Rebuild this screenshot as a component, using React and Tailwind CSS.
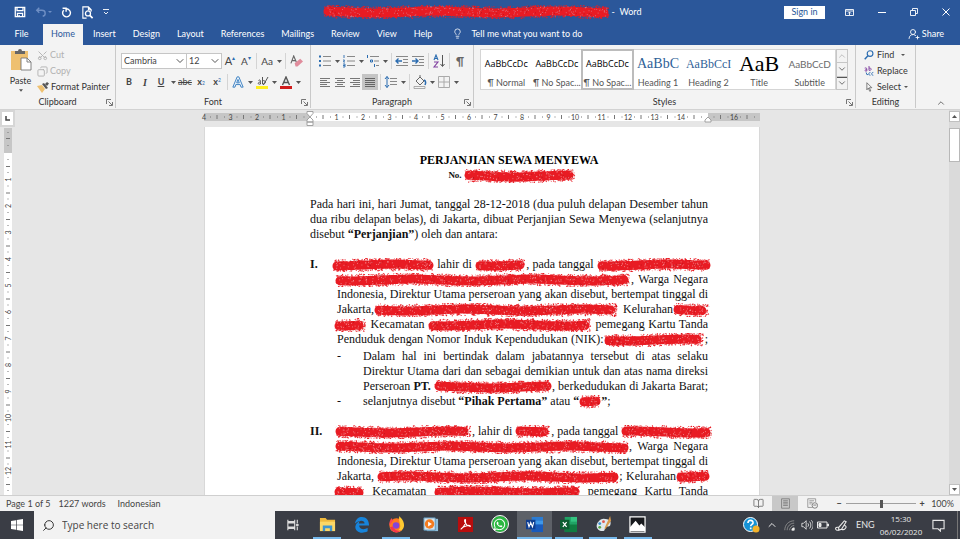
import { ChevronDown, ChevronUp, Lightbulb, Search, Scissors, Copy, UserRoundPlus, BookOpen } from 'lucide-react';
import { FaWhatsapp } from 'react-icons/fa';

const TABS = ['Insert', 'Design', 'Layout', 'References', 'Mailings', 'Review', 'View', 'Help'];

const STYLES = [
  { name: '¶ Normal', sample: 'AaBbCcDc', look: 'font-["Open_Sans",sans-serif] text-black' },
  { name: '¶ No Spac...', sample: 'AaBbCcDc', look: 'font-["Open_Sans",sans-serif] text-black' },
  { name: '¶ No Spac...', sample: 'AaBbCcDc', look: 'font-["Open_Sans",sans-serif] text-black', active: true },
  { name: 'Heading 1', sample: 'AaBbC', look: 'font-["Liberation_Serif",serif] text-[14px] text-[#2f5f97]' },
  { name: 'Heading 2', sample: 'AaBbCcI', look: 'font-["Liberation_Serif",serif] text-[12px] text-[#2f5f97]' },
  { name: 'Title', sample: 'AaB', look: 'font-["Liberation_Serif",serif] text-[22px] text-black' },
  { name: 'Subtitle', sample: 'AaBbCcD', look: 'text-[10px] text-[#6b6b6b]' },
];

// Small seeded generator so every scribble looks the same on each render
function makeRandom(seed) {
  let s = seed * 7919 + 17;
  return () => {
    s = (s * 16807) % 2147483647;
    return s / 2147483647;
  };
}

function scribblePaths(w, seed) {
  const rnd = makeRandom(seed);
  const mid = x => 7 + Math.sin(x / 19 + seed) * 0.9;
  let core = '';
  let edge = '';
  let light = '';
  let dark = '';
  for (let x = 5; x <= w - 5; x += 4) {
    core += `${core ? 'L' : 'M'}${x} ${mid(x).toFixed(1)}`;
  }
  for (let i = 0; i < w * 6; i++) {
    const x = 1 + rnd() * (w - 3);
    const end = Math.min(1, (Math.min(x, w - x) + 3) / 6);
    const y = mid(x) + (rnd() - 0.5) * 12.5 * end;
    edge += `M${x.toFixed(1)} ${y.toFixed(1)}l${(rnd() * 2 - 0.5).toFixed(1)} ${(rnd() * 2 - 1).toFixed(1)}`;
  }
  for (let i = 0; i < w * 0.9; i++) {
    const x = 3 + rnd() * (w - 6);
    const y = mid(x) + (rnd() - 0.5) * 10;
    light += `M${x.toFixed(1)} ${y.toFixed(1)}h.8`;
    if (i % 4 === 0) dark += `M${(x + 2).toFixed(1)} ${(y - 1).toFixed(1)}h.8`;
  }
  return { core, edge, light, dark };
}

function Scribble({ w, seed = w, className = '', tone = '#fff' }) {
  const p = scribblePaths(w, seed);
  return (
    <svg width={w} height="14" viewBox={`0 0 ${w} 14`} fill="none" aria-hidden="true" className={`inline-block align-middle shrink-0 ${className}`}>
      <path d={p.core} stroke="#e81c24" strokeWidth="9" strokeLinecap="round" />
      <path d={p.edge} stroke="#e81c24" strokeWidth="1.100" />
      <path d={p.light} stroke={tone} strokeOpacity=".6" strokeWidth=".8" />
      <path d={p.dark} stroke="#6d1014" strokeOpacity=".5" strokeWidth=".8" />
    </svg>
  );
}

function Icon({ size = 14, children, className = '' }) {
  return (
    <svg width={size} height={size} viewBox="0 0 14 14" fill="none" stroke="currentColor" strokeWidth="1" aria-hidden="true" className={`shrink-0 ${className}`}>
      {children}
    </svg>
  );
}

function Tool({ label, className = 'w-4', children }) {
  return (
    <button type="button" aria-label={label} className={`h-4 shrink-0 flex items-center justify-center text-[#444] ${className}`}>
      {children}
    </button>
  );
}

function Caret({ label = 'More', className = 'w-2' }) {
  return (
    <button type="button" aria-label={label} className={`h-4 shrink-0 flex items-center justify-center text-[#555] ${className}`}>
      <svg width="5" height="3" viewBox="0 0 5 3" fill="currentColor" aria-hidden="true"><path d="M0 0h5L2.500 3z" /></svg>
    </button>
  );
}

function Sep() {
  return <span className="w-px h-4 mx-0.5 shrink-0 bg-[#d4d4d4]" />;
}

function Group({ title, launcher = true, className, children }) {
  return (
    <section aria-label={title} className={`relative shrink-0 border-r border-[#c9c9c9] flex flex-col ${className}`}>
      <div className="flex-1">{children}</div>
      <div className="h-3 flex items-center justify-center leading-3 text-[#333]">{title}</div>
      {launcher && (
        <button type="button" aria-label={`${title} settings`} className="absolute right-0.5 bottom-0.5 text-[#666]">
          <svg width="7" height="7" viewBox="0 0 7 7" fill="none" stroke="currentColor" aria-hidden="true"><path d="M.5 5V.5H5M2.500 2.500l3.500 3.500M6.500 3v3.500H3" strokeWidth=".9" /></svg>
        </button>
      )}
    </section>
  );
}

function TitleBar() {
  return (
    <header className="h-6 flex items-center text-white">
      <div className="flex-1 flex items-center gap-[9px] pl-3.5">
        <button type="button" aria-label="Save">
          <Icon size={12}><path d="M1.500 1.500h11v11h-11zM3.500 1.500v4h7v-4M4 12.500V8.500h6v4M6 10.500v2" strokeWidth="1.500" /></Icon>
        </button>
        <button type="button" aria-label="Undo" className="flex items-center gap-px text-[#6f8fc4]">
          <Icon size={12}><path d="M5 2L2 5l3 3M2 5h6c5 0 5 6 1 7" strokeWidth="1.600" /></Icon>
          <svg width="4" height="2" viewBox="0 0 4 2" fill="currentColor"><path d="M0 0h4L2 2z" /></svg>
        </button>
        <button type="button" aria-label="Repeat">
          <Icon size={11}><path d="M3.500 4a5 5 0 1 0 6.500-.500M2 1.500h4.500V6M10 3.500c-1-.8-2-1.200-3-1.200" strokeWidth="1.800" /></Icon>
        </button>
        <button type="button" aria-label="Print preview">
          <Icon size={13}><path d="M6 13H2V1h6l3 3v2M8 1v3h3" strokeWidth="1.200" /><circle cx="7.500" cy="8" r="2.700" strokeWidth="1.400" /><path d="M9.500 10l3 3" strokeWidth="1.800" /></Icon>
        </button>
        <button type="button" aria-label="Customize toolbar">
          <svg width="6" height="6" viewBox="0 0 6 6" fill="none" stroke="currentColor"><path d="M0 .5h6M1 3l2 2 2-2" strokeWidth=".9" /></svg>
        </button>
      </div>
      <h1 className="flex items-center whitespace-nowrap">
        <Scribble w={287} seed={5} tone="#c9d3ea" />
        <span className="pl-0.5">- &nbsp;Word</span>
      </h1>
      <div className="flex-1 flex items-center justify-end gap-6 pr-2.5">
        <button type="button" className="h-[13px] w-[41px] mr-[-4px] bg-white text-[#2b579a] leading-3">Sign in</button>
        <button type="button" aria-label="Ribbon display options">
          <svg width="9" height="7" viewBox="0 0 9 7" fill="none" stroke="currentColor"><path d="M.5 .5h8v6h-8zM.5 2h8M4.500 6V3M3 4.500L4.500 3 6 4.500" strokeWidth=".9" /></svg>
        </button>
        <button type="button" aria-label="Minimize"><svg width="8" height="8" viewBox="0 0 8 8" stroke="currentColor"><path d="M0 4.500h8" /></svg></button>
        <button type="button" aria-label="Restore"><svg width="8" height="8" viewBox="0 0 8 8" fill="none" stroke="currentColor"><path d="M.5 2.500h5v5h-5zM2.500 2.500v-2h5v5h-2" strokeWidth=".9" /></svg></button>
        <button type="button" aria-label="Close"><svg width="8" height="8" viewBox="0 0 8 8" stroke="currentColor"><path d="M.5 .5l7 7M7.500 .5l-7 7" /></svg></button>
      </div>
    </header>
  );
}

function TabBar() {
  return (
    <nav className="h-[21px] flex items-stretch text-white">
      <button type="button" className="w-[43px] pb-0.5">File</button>
      <button type="button" aria-current="page" className="w-10 bg-[#f3f3f3] text-[#2b579a] pb-0.5">Home</button>
      <div className="flex gap-[17px] pl-2.5 pb-0.5">
        {TABS.map(t => <button key={t} type="button">{t}</button>)}
      </div>
      <button type="button" className="flex items-center gap-2 pl-5 pb-0.5">
        <Lightbulb size={11} strokeWidth={1.700} />
        Tell me what you want to do
      </button>
      <button type="button" className="ml-auto pr-4 pb-0.5 flex items-center gap-0.5">
        <UserRoundPlus size={12} strokeWidth={1.700} />
        Share
      </button>
    </nav>
  );
}

function Clipboard() {
  return (
    <Group title="Clipboard" className="w-[116px]">
      <div className="flex pt-1">
        <button type="button" className="w-[37px] pl-1 flex flex-col items-center leading-3">
          <svg width="22" height="22" viewBox="0 0 22 22" aria-hidden="true" className="mb-1">
            <rect x="1" y="2" width="17" height="19" fill="#eec070" />
            <path d="M5 2h3a2 2 0 0 1 4 0h3v3H5z" fill="#666" />
            <path d="M11 9h6l4 4v8H11z" fill="#fff" stroke="#777" strokeWidth=".9" />
            <path d="M17 9v4h4" fill="none" stroke="#777" strokeWidth=".9" />
          </svg>
          Paste
          <svg width="4" height="3" viewBox="0 0 5 3" fill="#555" className="mt-0.5"><path d="M0 0h5L2.500 3z" /></svg>
        </button>
        <div className="flex flex-col items-start gap-1">
          <button type="button" disabled className="h-3 flex items-center gap-0.5 text-[#b1b1b1]"><Scissors size={11} className="-rotate-90" />Cut</button>
          <button type="button" disabled className="h-3 flex items-center gap-0.5 text-[#b1b1b1]"><Copy size={11} className="-scale-x-100" />Copy</button>
          <button type="button" className="h-3 flex items-center gap-0.5">
            <svg width="12" height="11" viewBox="0 0 12 11" aria-hidden="true"><path d="M0 4l5-1 3 4-3 4z" fill="#eec070" /><path d="M5 2l2-1 4 5-2 1zM8 2l2-2 2 1.500L10 4z" fill="#555" /></svg>
            Format Painter
          </button>
        </div>
      </div>
    </Group>
  );
}

function Combo({ label, value, className }) {
  return (
    <label className={`relative h-4 block border border-[#c6c6c6] bg-white ${className}`}>
      <select aria-label={label} defaultValue={value} className="w-full h-full appearance-none pl-0.5 leading-3 outline-none text-[#444] block">
        <option>{value}</option>
      </select>
      <ChevronDown size={12} strokeWidth={2} className="absolute right-0 top-px pointer-events-none text-[#555]" />
    </label>
  );
}

function FontGroup() {
  return (
    <Group title="Font" className="w-[195px]">
      <div className="flex items-center h-4 mt-2 pl-[5px]">
        <Combo label="Font" value="Cambria" className="w-[66px]" />
        <Combo label="Font size" value="12" className="w-9 -ml-px" />
        <Tool label="Grow font"><span className="text-[11px]">A</span><span className="text-[#2b6cb0] text-[6px] self-start">▴</span></Tool>
        <Tool label="Shrink font"><span className="text-[10px]">A</span><span className="text-[#2b6cb0] text-[6px] self-start">▾</span></Tool>
        <Sep />
        <Tool label="Change case"><span className="text-[10px]">Aa</span></Tool>
        <Caret />
        <Sep />
        <Tool label="Clear formatting">
          <Icon size={13}><path d="M1 9L4 1l3 7M2 6h4" stroke="#666" strokeWidth="1.200" /><path d="M5 9l6-5 3 3-6 5.500H6z" fill="#e08c9c" stroke="none" /></Icon>
        </Tool>
      </div>
      <div className="flex items-center h-4 mt-[5px] pl-[5px]">
        <Tool label="Bold"><b>B</b></Tool>
        <Tool label="Italic"><i className="font-['Liberation_Serif',serif] text-[10px] font-bold">I</i></Tool>
        <Tool label="Underline"><u className="font-bold">U</u></Tool>
        <Caret />
        <Tool label="Strikethrough"><s>abc</s></Tool>
        <Tool label="Subscript"><b>x</b><sub className="text-[5px] text-[#2b6cb0]">2</sub></Tool>
        <Tool label="Superscript"><b>x</b><sup className="text-[5px] text-[#2b6cb0]">2</sup></Tool>
        <Sep />
        <Tool label="Text effects">
          <Icon size={12}><path d="M1 13L6 1h2l5 12h-2.500L9.500 10h-5l-1 3zM5.500 8L7 4l1.500 4z" stroke="#3c7fc0" fill="#e8f2fb" strokeWidth="1.100" /></Icon>
        </Tool>
        <Caret />
        <Tool label="Highlight">
          <svg width="13" height="13" viewBox="0 0 13 13"><path d="M0 10h12v3H0z" fill="#ffef1f" /><path d="M2.500 4.500c2-1.500 2 0 2 3.500-3 1-3-2 0-2M6.500 1v7c4 1 3.500-5 0-3M12 1L8 8l-1 1" fill="none" stroke="#555" strokeWidth="1" /></svg>
        </Tool>
        <Caret />
        <Tool label="Font color">
          <svg width="12" height="13" viewBox="0 0 12 13"><path d="M0 10h12v3H0z" fill="#d01c1c" /><path d="M2.500 9L6 1l3.500 8M4 6.500h4" fill="none" stroke="#555" strokeWidth="1.400" /></svg>
        </Tool>
        <Caret />
      </div>
    </Group>
  );
}

const ALIGN = {
  'Align left': 'M2 3.500h10M2 5.500h7M2 7.500h10M2 9.500h7M2 11.500h10',
  Center: 'M2 3.500h10M4 5.500h6M2 7.500h10M4 9.500h6M2 11.500h10',
  'Align right': 'M2 3.500h10M5 5.500h7M2 7.500h10M5 9.500h7M2 11.500h10',
};

function ParagraphGroup() {
  return (
    <Group title="Paragraph" className="w-[163px]">
      <div className="flex items-center h-4 mt-2 pl-1.5">
        <Tool label="Bullets"><Icon><path d="M5 2.500h8M5 7h8M5 11.500h8" stroke="#888" /><path d="M1 2.500h2M1 7h2M1 11.500h2" stroke="#2b6cb0" strokeWidth="2" /></Icon></Tool>
        <Caret />
        <Tool label="Numbering"><Icon><path d="M5 2.500h8M5 7h8M5 11.500h8" stroke="#888" /><path d="M2 1v3M1 6h1.500l-1 2H3M1 10h2v3H1M1 11.500h2" stroke="#2b6cb0" strokeWidth=".9" /></Icon></Tool>
        <Caret />
        <Tool label="Multilevel list"><Icon><path d="M4 2.500h9M8 7h5M10 11.500h3" stroke="#888" /><path d="M1.500 1v3M4.500 6h2v2h-2zM8.500 10v3" stroke="#2b6cb0" /></Icon></Tool>
        <Caret />
        <Sep />
        <Tool label="Decrease indent"><Icon><path d="M1 2.500h12M8 5.500h5M8 8.500h5M1 11.500h12" stroke="#888" /><path d="M7 7H1M3.500 4.500L1 7l2.500 2.500" stroke="#2b6cb0" strokeWidth="1.400" /></Icon></Tool>
        <Tool label="Increase indent"><Icon><path d="M1 2.500h12M8 5.500h5M8 8.500h5M1 11.500h12" stroke="#888" /><path d="M1 7h6M4.500 4.500L7 7 4.500 9.500" stroke="#2b6cb0" strokeWidth="1.400" /></Icon></Tool>
        <Sep />
        <Tool label="Sort"><Icon><path d="M2 6l2-5 2 5M2.500 4.500h3" stroke="#2b6cb0" strokeWidth="1.100" /><path d="M2 8h4l-4 5h4" stroke="#8040a0" strokeWidth="1.100" /><path d="M10.500 1v11M8.500 10l2 2.500 2-2.500" stroke="#555" /></Icon></Tool>
        <Sep />
        <Tool label="Show marks"><b className="text-[11px] text-[#666]">¶</b></Tool>
      </div>
      <div className="flex items-center h-4 mt-[5px] pl-1.5">
        {Object.entries(ALIGN).map(([label, d]) => (
          <Tool key={label} label={label} className="w-[15px]"><Icon><path d={d} stroke="#777" /></Icon></Tool>
        ))}
        <Tool label="Justify" className="w-4 bg-[#c5c5c5]"><Icon><path d="M2 3.500h10M2 5.500h10M2 7.500h10M2 9.500h10M2 11.500h10" stroke="#666" /></Icon></Tool>
        <Sep />
        <Tool label="Line spacing"><Icon><path d="M6 3.500h7M6 6.500h7M6 9.500h7" stroke="#888" /><path d="M3 1.500v11M1 4l2-2.500L5 4M1 10l2 2.500L5 10" stroke="#2b6cb0" /></Icon></Tool>
        <Caret />
        <Sep />
        <Tool label="Shading"><Icon><path d="M3 6l4-4 4 4-4 4zM7 2V0" stroke="#666" /><path d="M11 5c2 1 2 3 1 5" stroke="#2b6cb0" strokeWidth="1.500" /><path d="M1 11.500h11v2H1z" stroke="#999" strokeWidth=".8" /></Icon></Tool>
        <Caret />
        <Tool label="Borders"><Icon><path d="M1.500 1.500h11v11h-11zM7 1.500v11M1.500 7h11" stroke="#aaa" /></Icon></Tool>
        <Caret />
      </div>
    </Group>
  );
}

function StylesGroup() {
  return (
    <Group title="Styles" className="w-[382px]">
      <div className="flex mt-1 ml-1.5 mr-[7px] h-[41px]">
        <div className="flex-1 grid grid-cols-7 bg-white border border-[#d5d5d5]">
          {STYLES.map((s, i) => (
            <button
              key={i}
              type="button"
              className={`min-w-0 flex flex-col items-center ${s.active ? 'outline-2 -outline-offset-1 outline-[#bcbcbc]' : ''}`}
            >
              <span className={`h-[27px] whitespace-nowrap leading-[28px] ${s.look}`}>{s.sample}</span>
              <span className="leading-3 text-[#555] whitespace-nowrap">{s.name}</span>
            </button>
          ))}
        </div>
        <div className="w-3 flex flex-col divide-y divide-[#c6c6c6] border border-[#c6c6c6] text-[#555]">
          <button type="button" aria-label="Previous styles" className="flex-1 flex items-center justify-center text-[#b5b5b5]"><ChevronUp size={10} /></button>
          <button type="button" aria-label="Next styles" className="flex-1 flex items-center justify-center"><ChevronDown size={10} /></button>
          <button type="button" aria-label="All styles" className="flex-1 flex flex-col items-center justify-center"><span className="w-2.5 h-px bg-[#555]" /><ChevronDown size={10} /></button>
        </div>
      </div>
    </Group>
  );
}

function EditingGroup() {
  return (
    <Group title="Editing" launcher={false} className="w-[60px]">
      <div className="flex flex-col items-start gap-1 pt-1 pl-2">
        <button type="button" className="h-3 flex items-center gap-[3px]">
          <Icon size={10}><circle cx="8.500" cy="5" r="4" stroke="#2b6cb0" strokeWidth="1.600" /><path d="M5.500 8L1 13" stroke="#2b6cb0" strokeWidth="2" /></Icon>
          Find
          <svg width="4" height="2" viewBox="0 0 4 2" fill="#555" className="ml-1"><path d="M0 0h4L2 2z" /></svg>
        </button>
        <button type="button" className="h-3 flex items-center gap-[3px]">
          <Icon size={10}><path d="M1 3c3-1 3 0 3 4-3 1-4-2 0-2M7 0v6c4 1 4-4 0-3" stroke="#8040a0" strokeWidth="1.300" /><path d="M3 9l1 3h2M9 9c-3 0-3 4 0 4M13 9c-3 0-3 4 0 4" stroke="#2b6cb0" strokeWidth="1.300" /></Icon>
          Replace
        </button>
        <button type="button" className="h-3 flex items-center gap-[3px]">
          <Icon size={10}><path d="M4 1l7 7H7.500l2 4.500-1.500.5-2-4.500L4 11z" stroke="#555" /></Icon>
          Select
          <svg width="4" height="2" viewBox="0 0 4 2" fill="#555"><path d="M0 0h4L2 2z" /></svg>
        </button>
      </div>
    </Group>
  );
}

const UNIT = 26.5;

function HorizontalRuler() {
  const left = [4, 3, 2, 1];
  const right = Array.from({ length: 16 }, (_, i) => i + 1).filter(n => n !== 15);
  const cells = Array.from({ length: 21 }, (_, i) => i - 4);
  return (
    <svg width="556" height="15" viewBox="0 0 556 15" aria-label="Ruler" className="overflow-visible block">
      <path d="M0 3h556v8H0z" fill="#c6c6c6" />
      <path d="M106 3h398v8H106z" fill="#fff" />
      <g stroke="#777" strokeWidth="1">
        {cells.filter(c => 106 + c * UNIT + 20 < 556).map(c => (
          <path key={c} d={`M${106 + c * UNIT + 6} 7h1M${106 + c * UNIT + 13} 5v4M${106 + c * UNIT + 20} 7h1`} />
        ))}
      </g>
      <g fontSize="7" fill="#444" textAnchor="middle">
        {left.map(n => <text key={`l${n}`} x={106 - n * UNIT} y="10">{n}</text>)}
        {right.map(n => <text key={n} x={106 + n * UNIT} y="10">{n}</text>)}
      </g>
      <path d="M103 1.500h6v2l-3 3.500-3-3.500zM103 12v-2l3-3 3 3v2zM103 12h6v3.500h-6zM501 12v-2l3-3 3 3v2z" fill="#fff" stroke="#999" strokeWidth=".9" />
    </svg>
  );
}

function VerticalRuler() {
  return (
    <svg width="8" height="400" viewBox="0 0 8 400" aria-label="Vertical ruler" className="block">
      <path d="M0 0h8v25H0z" fill="#c6c6c6" />
      <path d="M0 25h8v375H0z" fill="#fff" />
      <path d="M2 10.500h4M4 4v1M4 17v1" stroke="#777" />
      {Array.from({ length: 14 }, (_, i) => (
        <path key={i} d={`M4 ${31 + i * UNIT}v1M2 ${38.5 + i * UNIT}h4M4 ${44 + i * UNIT}v1`} stroke="#777" />
      ))}
      <g fontSize="7" fill="#444" textAnchor="middle">
        {Array.from({ length: 12 }, (_, i) => (
          <text key={i} transform={`translate(6.500 ${51.5 + i * UNIT}) rotate(-90)`}>{i + 1}</text>
        ))}
      </g>
    </svg>
  );
}

// One typeset line, spread to both margins unless it is the last of its paragraph
function Line({ last, children }) {
  return (
    <span className={`block whitespace-nowrap ${last ? '' : 'text-justify [text-align-last:justify]'}`}>{children}</span>
  );
}

function Party({ num, children }) {
  return (
    <li className="flex mt-[15px]">
      <b className="w-[27px] shrink-0">{num}</b>
      <div className="flex-1 min-w-0">{children}</div>
    </li>
  );
}

function Document() {
  return (
    <article className="w-[556px] shrink-0 bg-white border-x border-[#d8d8d8] pl-[105px] pr-[51px] pt-[25px] font-['Liberation_Serif',serif] text-[12px] leading-[15px] text-[#111]">
      <h2 className="text-center font-bold leading-4 text-black">PERJANJIAN SEWA MENYEWA</h2>
      <p className="text-center font-bold text-[9px] h-[15px] flex justify-center items-center gap-0.5 pl-1.5">No. <Scribble w={112} /></p>
      <p className="mt-3.5">
        <Line>Pada hari ini, hari Jumat, tanggal 28-12-2018 (dua puluh delapan Desember tahun</Line>
        <Line>dua ribu delapan belas), di Jakarta, dibuat Perjanjian Sewa Menyewa (selanjutnya</Line>
        <Line last>disebut <b>“Perjanjian”</b>) oleh dan antara:</Line>
      </p>
      <ol>
        <Party num="I.">
          <Line><Scribble w={102} className="-ml-[5px] -my-1" /> lahir di <Scribble w={51} className="-my-1" />, pada tanggal <Scribble w={114} className="-mr-[3px] -my-1" /></Line>
          <Line><Scribble w={296} className="-ml-0.5 -my-1" />, Warga Negara</Line>
          <Line>Indonesia, Direktur Utama perseroan yang akan disebut, bertempat tinggal di</Line>
          <Line>Jakarta,<Scribble w={245} className="-my-1" /> Kelurahan<Scribble w={37} className="-mr-0.5 -my-1" /></Line>
          <Line><Scribble w={33} className="-ml-[3px] -my-1" /> Kecamatan <Scribble w={164} className="-my-1" /> pemegang Kartu Tanda</Line>
          <Line>Penduduk dengan Nomor Induk Kependudukan (NIK):<Scribble w={101} className="-my-1" />;</Line>
          <ul className="mt-0.5">
            <li className="flex">
              <span className="w-[26px] shrink-0">-</span>
              <div className="flex-1 min-w-0">
                <Line>Dalam hal ini bertindak dalam jabatannya tersebut di atas selaku</Line>
                <Line>Direktur Utama dari dan sebagai demikian untuk dan atas nama direksi</Line>
                <Line>Perseroan <b>PT.</b> <Scribble w={118} className="-my-1" />, berkedudukan di Jakarta Barat;</Line>
              </div>
            </li>
            <li className="flex">
              <span className="w-[26px] shrink-0">-</span>
              <Line last>selanjutnya disebut <b>“Pihak Pertama”</b> atau <b>“</b><Scribble w={22} className="-my-1" /><b>”</b>;</Line>
            </li>
          </ul>
        </Party>
        <Party num="II.">
          <Line><Scribble w={137} className="-ml-0.5 -my-1" />, lahir di <Scribble w={36} className="-my-1" />, pada tanggal <Scribble w={92} className="-mr-[3px] -my-1" /></Line>
          <Line><Scribble w={294} className="-ml-0.5 -my-1" />, Warga Negara</Line>
          <Line>Indonesia, Direktur Utama perseroan yang akan disebut, bertempat tinggal di</Line>
          <Line>Jakarta, <Scribble w={242} className="-my-1" />; Kelurahan<Scribble w={34} className="-mr-0.5 -my-1" /></Line>
          <Line><Scribble w={31} className="-ml-[3px] -my-1" /> Kecamatan <Scribble w={147} className="-my-1" /> pemegang Kartu Tanda</Line>
        </Party>
      </ol>
    </article>
  );
}

function Workspace() {
  return (
    <main className="flex-1 min-h-0 flex bg-[#e6e6e6]">
      <div className="w-[15px] shrink-0 flex flex-col overflow-hidden">
        <div className="h-[17px] shrink-0 border-2 border-[#d6d6d6] bg-white flex items-center justify-center mb-px">
          <svg width="5" height="5" viewBox="0 0 5 5" stroke="#444" fill="none"><path d="M1 0v4h4" strokeWidth="1.500" /></svg>
        </div>
        <div className="pl-1"><VerticalRuler /></div>
      </div>
      <div className="flex-1 min-w-0 flex flex-col items-center overflow-hidden">
        <div className="h-[17px] shrink-0"><HorizontalRuler /></div>
        <div className="flex-1 min-h-0 overflow-hidden flex"><Document /></div>
      </div>
      <div className="w-[11px] shrink-0 pt-px flex flex-col bg-[#dadada]">
        <button type="button" aria-label="Scroll up" className="h-[11px] border border-[#c0c0c0] bg-white flex items-center justify-center"><svg width="5" height="3" viewBox="0 0 5 3" fill="#555"><path d="M0 3h5L2.500 0z" /></svg></button>
        <div className="h-[34px] mt-1.5 border border-[#b8b8b8] bg-white" />
        <button type="button" aria-label="Scroll down" className="mt-auto h-[11px] border border-[#c0c0c0] bg-white flex items-center justify-center"><svg width="5" height="3" viewBox="0 0 5 3" fill="#555"><path d="M0 0h5L2.500 3z" /></svg></button>
      </div>
    </main>
  );
}

function StatusBar() {
  return (
    <footer className="h-4 shrink-0 border-t border-[#cfcfcf] bg-[#f2f2f2] flex items-center pl-1.5 pr-1.5 text-[#444]">
      <span>Page 1 of 5</span>
      <span className="pl-2">1227 words</span>
      <span className="pl-3">Indonesian</span>
      <div className="ml-auto flex items-center">
        <button type="button" aria-label="Read mode" className="w-7 flex justify-center text-[#777]"><BookOpen size={11} /></button>
        <button type="button" aria-label="Print layout" className="w-[26px] h-[15px] bg-[#c8c8c8] flex items-center justify-center">
          <Icon size={11}><path d="M2 1h10v12H2zM4 3.500h6M4 5.500h6M4 7.500h6M4 9.500h6" stroke="#777" /></Icon>
        </button>
        <button type="button" aria-label="Web layout" className="w-7 flex justify-center">
          <Icon size={11}><path d="M7 12H1V1h10v4M3 3.500h6M3 5.500h4M3 7.500h3" stroke="#888" /><circle cx="10" cy="9.500" r="3.500" stroke="#666" /><path d="M8 9h4" stroke="#666" /></Icon>
        </button>
        <button type="button" aria-label="Zoom out" className="ml-2 w-2.5 font-bold">−</button>
        <input
          type="range"
          aria-label="Zoom"
          defaultValue="50"
          className="w-[70px] h-2 mx-0.5 appearance-none bg-[linear-gradient(#a0a0a0,#a0a0a0)] bg-no-repeat bg-center bg-[length:100%_1px] [&::-webkit-slider-thumb]:appearance-none [&::-webkit-slider-thumb]:w-[3px] [&::-webkit-slider-thumb]:h-2 [&::-webkit-slider-thumb]:bg-[#555]"
        />
        <button type="button" aria-label="Zoom in" className="w-2 font-bold">+</button>
        <span className="w-7 text-right">100%</span>
      </div>
    </footer>
  );
}

const APPS = [
  {
    name: 'File Explorer', open: true,
    icon: <><path d="M1 2h6l1.500 2H17v12H1z" fill="#f0b93c" /><path d="M1 6h16v10H1z" fill="#fcd766" /><path d="M4 16v-6h10v6h-2.500v-3h-5v3z" fill="#3f95d0" /></>,
  },
  {
    name: 'Edge',
    icon: <path d="M2 8C3 3 6 1 9.500 1 14 1 17 4.500 17 10H6.500c0 4 5 5 9 2.800v3.400C8 20 2 16 2.500 11 3 8 5 6 7.500 5.500 6.500 6 6.200 7 6.200 8h6C12.200 5 8 3.500 2 8z" fill="#1784db" />,
  },
  {
    name: 'Firefox', open: true,
    icon: <><circle cx="9" cy="10" r="7.500" fill="#ff7a1f" /><path d="M12 0c1 2 5 4 5 10-1 9-13 9-15.500 2C4 17 12 18 13 11c0-4-2-5-1-11z" fill="#ffcb32" /><path d="M1.500 10C1 6 3 3 4 2c0 2 1 2 2 2z" fill="#ff4a4f" /><circle cx="8.500" cy="10" r="3.500" fill="#8445d8" /><path d="M2 12c2 6 8 7 12 3-4 1-7 0-9-4z" fill="#f4364c" /></>,
  },
  {
    name: 'Media Player',
    icon: <><path d="M5 3h12v13H5z" fill="#8fc0dd" /><path d="M2 2h12v13H2z" fill="#d4e5f0" stroke="#5b8fb2" /><circle cx="8" cy="8.500" r="5" fill="#f47c20" /><path d="M6.500 6l4 2.500-4 2.500z" fill="#fff" /></>,
  },
  {
    name: 'Acrobat Reader',
    icon: <><path d="M1 1h16v16H1z" fill="#b90d0d" /><path d="M4 14c2-1 6-6 5-10-2-1-1 6 5 7 1-2-7-1-10 3z" fill="none" stroke="#fff" strokeWidth="1.200" /></>,
  },
  { name: 'WhatsApp', whatsapp: true },
  {
    name: 'Word', open: true, active: true,
    icon: <><path d="M6 1h12v16H6z" fill="#2b7cd3" /><path d="M6 5h12v4H6z" fill="#3f97e8" /><path d="M6 9h12v8H6z" fill="#185abd" /><path d="M0 4h10v10H0z" fill="#103f91" /><path d="M1.800 6.500l1.400 5L5 7l1.800 4.500 1.400-5" fill="none" stroke="#fff" strokeWidth="1.200" /></>,
  },
  {
    name: 'Excel', open: true,
    icon: <><path d="M5 1h13v16H5z" fill="#21a366" /><path d="M11.500 1H18v5h-6.500z" fill="#33c481" /><path d="M5 9h13v8H5z" fill="#107c41" /><path d="M0 4h10v10H0z" fill="#0c5c30" /><path d="M3 6.500l4 5M7 6.500l-4 5" stroke="#fff" strokeWidth="1.300" /></>,
  },
  {
    name: 'Paint', open: true,
    icon: <><path d="M9 3c6 0 9 3 7 7-1 2-4 0-5 2s0 4-3 4c-5 0-7-4-6-7s4-6 7-6z" fill="#dfe7ec" /><circle cx="5" cy="8" r="1.500" fill="#3b8ed0" /><circle cx="9" cy="6" r="1.500" fill="#e0574c" /><circle cx="5" cy="12" r="1.500" fill="#58a845" /><path d="M16 0l1 5-6 9-1-1z" fill="#d89a4c" /></>,
  },
  {
    name: 'Photos', open: true,
    icon: <><path d="M1 1h16v16H1z" fill="#17191d" stroke="#fff" strokeWidth="1.300" /><path d="M1 16v-4l6-7 4 5 2-2 4 4v4z" fill="#fff" /></>,
  },
];

function Taskbar() {
  return (
    <div className="h-7 shrink-0 bg-[#3a3d45] flex items-stretch text-white">
      <button type="button" aria-label="Start" className="w-[34px] flex items-center justify-center">
        <svg width="12" height="12" viewBox="0 0 12 12" fill="#fff"><path d="M0 2l5-.8v4.500H0zM5.700 1L12 0v5.700H5.700zM0 6.300h5v4.500L0 10zM5.700 6.300H12V12l-6.300-1z" /></svg>
      </button>
      <label className="w-[241px] bg-[#f2f2f2] flex items-center pl-2 gap-[7px] text-[#333]">
        <Search size={13} strokeWidth={1.800} className="-scale-x-100" />
        <input type="text" aria-label="Search" placeholder="Type here to search" className="flex-1 min-w-0 font-['Open_Sans',sans-serif] text-[10px] outline-none placeholder:text-[#444]" />
      </label>
      <button type="button" aria-label="Task view" className="w-[35px] flex items-center justify-center text-[#ddd]">
        <Icon size={12}><path d="M1 1v2h8V1M1 13v-2h8v2M1 4.500h8v5H1zM12 1v4M12 9v4" strokeWidth="1.300" /><path d="M11 6h2v2h-2z" fill="currentColor" /></Icon>
      </button>
      <div className="w-[345px] grid grid-cols-10">
        {APPS.map(a => (
          <button
            key={a.name}
            type="button"
            aria-label={a.name}
            className={`flex flex-col items-center ${a.active ? 'bg-[#5d6168]' : ''}`}
          >
            <span className="flex-1 flex items-center">
              {a.whatsapp
                ? <span className="w-4 h-4 rounded-full bg-[#2cb742] flex items-center justify-center outline outline-white"><FaWhatsapp size={13} /></span>
                : <svg width="17" height="17" viewBox="0 0 18 18" aria-hidden="true">{a.icon}</svg>}
            </span>
            <span className={`h-0.5 ${a.active ? 'w-full' : 'w-7'} ${a.open ? 'bg-[#76b9ed]' : ''}`} />
          </button>
        ))}
      </div>
      <div className="ml-auto flex items-center text-[#e8e8e8]">
        <button type="button" aria-label="Help" className="mr-1.5">
          <svg width="17" height="16" viewBox="0 0 17 16"><circle cx="7.500" cy="7.500" r="7" fill="#1592d4" stroke="#fff" /><path d="M5 6c0-4 5.500-3 5 0-.3 1.500-2.300 1.500-2.300 3.300M7.700 10.500v1.700" stroke="#fff" strokeWidth="1.700" fill="none" /><circle cx="13" cy="12" r="3.500" fill="#f3b32b" /></svg>
        </button>
        <button type="button" aria-label="Hidden icons" className="mr-1.5"><ChevronUp size={12} /></button>
        <button type="button" aria-label="Wi-Fi" className="mr-1.5">
          <Icon size={11}><path d="M1 13C1 6 6 1 13 1M4 13c0-5 4-9 9-9M7 13c0-3 3-6 6-6" stroke="#999" /><path d="M10 13c0-2 1-3 3-3v3z" fill="currentColor" /></Icon>
        </button>
        <button type="button" aria-label="Volume" className="mr-1">
          <Icon size={12}><path d="M1 5h2l3-3v10L3 9H1zM8 5c1 1 1 3 0 4M10 3c2 2 2 6 0 8M12 1.500c3 3 3 8 0 11" /></Icon>
        </button>
        <button type="button" aria-label="Battery" className="mr-1.5">
          <svg width="12" height="8" viewBox="0 0 12 8" fill="none" stroke="currentColor"><path d="M.5 1h9.500v6H.5zM10.500 3h1v2h-1z" /><path d="M2 2.500h2v3H2z" fill="currentColor" /></svg>
        </button>
        <button type="button" aria-label="Ink workspace" className="mr-2">
          <Icon size={13}><path d="M4 9l6-7 2 1-5 8-3 1zM4 9c-5-1-4 4 0 3M7 11c4 2 7-4 3-4" strokeWidth="1.200" /></Icon>
        </button>
        <span className="w-[18px] mr-1">ENG</span>
        <time className="w-[46px] text-center font-['Open_Sans',sans-serif] text-[8px] leading-[13px]">15:30<br />06/02/2020</time>
        <button type="button" aria-label="Notifications" className="ml-2 mr-3">
          <Icon size={13}><path d="M1 1.500h12v9H9v2.500L6.500 10.500H1z" strokeWidth="1.200" /></Icon>
        </button>
        <span className="w-px h-7 bg-[#777] mr-0.5" />
      </div>
    </div>
  );
}

export default function App() {
  return (
    <div className="h-screen flex flex-col overflow-hidden font-['Lato','Open_Sans',sans-serif] text-[9px] text-[#333]">
      <div className="shrink-0 bg-[#2b579a]">
        <TitleBar />
        <TabBar />
      </div>
      <div className="h-[65px] shrink-0 flex bg-[#f3f3f3] border-b border-[#d2d2d2] pb-px">
        <Clipboard />
        <FontGroup />
        <ParagraphGroup />
        <StylesGroup />
        <EditingGroup />
        <button type="button" aria-label="Collapse ribbon" className="ml-auto self-end pr-3.5 text-[#555]"><ChevronUp size={10} /></button>
      </div>
      <Workspace />
      <StatusBar />
      <Taskbar />
    </div>
  );
}
